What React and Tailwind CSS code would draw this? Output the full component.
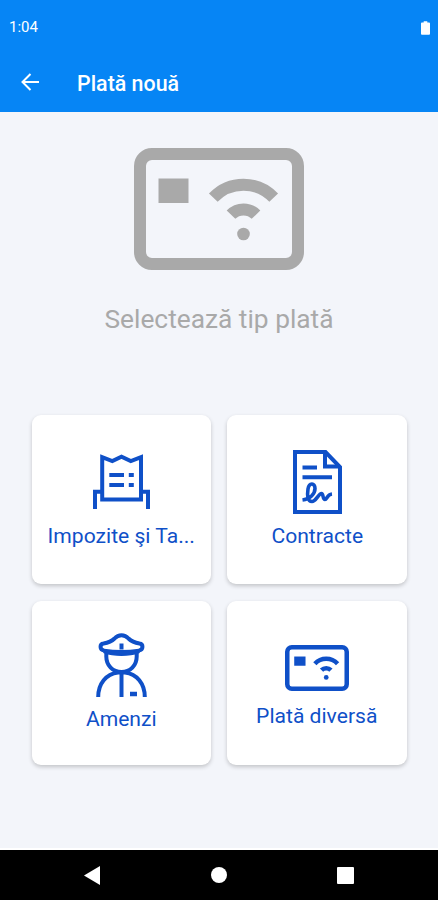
function CardIcon({ className }) {
  return (
    <svg viewBox="0 0 170 122" fill="none" stroke="currentColor" strokeWidth="12" className={className}>
      <rect x="6" y="6" width="158" height="110" rx="12" />
      <rect x="24.5" y="30.5" width="30" height="24.5" fill="currentColor" stroke="none" />
      <path d="M79.3 49.7a41.6 41.6 0 0 1 60.4 0" />
      <path d="M97 66.7a17.4 17.4 0 0 1 25 0" />
      <circle cx="109.5" cy="86" r="6.3" fill="currentColor" stroke="none" />
    </svg>
  )
}

function ReceiptIcon({ className }) {
  return (
    <svg viewBox="0 0 57 55" fill="none" stroke="currentColor" strokeWidth="4" className={className}>
      <path d="M9.2 45.5V3.2L19.3 7l9.2-4.2L37.8 7 48 3.2v42.3z" />
      <path d="M2 55V37.7h7M55 55V37.7h-7" />
      <path d="M16.3 21H31M35.8 21h5M16.3 31H31M35.8 31h5" />
    </svg>
  )
}

function ContractIcon({ className }) {
  return (
    <svg viewBox="0 0 49 64" fill="none" stroke="currentColor" strokeWidth="4" className={className}>
      <path d="M2 2h30.5L47 17v45H2z" />
      <path d="M32 2v14.5h15" />
      <path d="M9.5 17.5H24M9.5 27.3H39" />
      <path
        strokeWidth="3.6"
        strokeLinejoin="round"
        d="M9.5 50C17 49 22 44 22 38.5C22 32.5 16 32.5 15 39C14 46 14.5 51.5 19 51.5C23 51.5 25.5 43.5 28.5 43.5C30.5 43.5 29.5 49.5 32 49.5C34 49.5 34 44.5 39 44"
      />
    </svg>
  )
}

function OfficerIcon({ className }) {
  return (
    <svg viewBox="0 0 51 64" fill="none" stroke="currentColor" strokeWidth="4" strokeLinejoin="round" className={className}>
      <path d="M8 17.5c-4.5-.5-4.5-6.500-.5-7 6-1 8-2 11-5 4-4.5 10-4.5 14 0 3 3 5 4 11 5 4 .5 4 6.5-.5 7" />
      <path d="M8 16.5c10 1.500 25 1.500 35 0v3c-10 3.500-25 3.500-35 0z" fill="currentColor" strokeWidth="1.5" />
      <path d="M10.3 18v5.5c0 9 6.500 15.500 15.200 15.500s15.200-6.500 15.200-15.500V18" />
      <path d="M2.2 64c0-13.500 8-23 19.800-24.500h7c11.800 1.500 19.800 11 19.800 24.500" />
      <path d="M25.5 40v24" />
      <path d="M34 61h7" strokeWidth="4.5" />
      <path d="M25.500 10.500v6" />
    </svg>
  )
}

function PaymentCard({ icon, label, className }) {
  return (
    <button
      className={`flex flex-col items-center rounded-[9px] bg-white text-[#0f50c8] shadow-[0_2px_4px_rgba(0,0,0,0.2)] ${className}`}
    >
      {icon}
      <span className="whitespace-nowrap text-[21.1px] leading-6">{label}</span>
    </button>
  )
}

function StatusBar() {
  return (
    <div className="flex h-[55px] items-center justify-between pl-[9px] pr-[8px] text-white">
      <span className="text-[15px] leading-none">1:04</span>
      <svg viewBox="0 0 10 15" fill="currentColor" className="h-[14px] w-[9px]">
        <path d="M3 0h4v1.500h2a1 1 0 0 1 1 1V14a1 1 0 0 1-1 1H1a1 1 0 0 1-1-1V2.500a1 1 0 0 1 1-1h2z" />
      </svg>
    </div>
  )
}

function NavigationBar() {
  return (
    <nav className="flex h-[50px] items-center justify-between bg-black pl-[84px] pr-[84px] text-white">
      <svg viewBox="0 0 16 19" fill="currentColor" className="h-[19px] w-4">
        <path d="M0 9.5 16 0v19z" />
      </svg>
      <div className="h-4 w-4 rounded-full bg-white" />
      <div className="h-[17px] w-[17px] rounded-[1px] bg-white" />
    </nav>
  )
}

export default function App() {
  return (
    <div className="flex h-[900px] w-[438px] flex-col overflow-hidden bg-[#f3f5fa] font-[Roboto,sans-serif]">
      <header className="h-28 shrink-0 bg-[#0685f5]">
        <StatusBar />
        <div className="flex h-[55px] items-center pl-[21px] text-white">
          <svg viewBox="0 0 18 18" fill="none" stroke="currentColor" strokeWidth="2" className="mb-px h-[18px] w-[18px]">
            <path d="M18 9H1.500M9.500 1 1.500 9l8 8" />
          </svg>
          <h1 className="ml-[38px] mt-[2px] text-[21.4px] font-medium leading-6">Plată nouă</h1>
        </div>
      </header>

      <main className="flex flex-1 flex-col items-center border-b-2 border-white">
        <CardIcon className="mt-[36px] h-[122px] w-[170px] text-[#a9a9a9]" />
        <p className="mt-[33px] text-[26.3px] leading-8 text-[#a9a9a9]">Selectează tip plată</p>
        <div className="mt-[80px] grid w-[375px] grid-cols-2 grid-rows-[169px_164px] gap-x-[16px] gap-y-[17px]">
          <PaymentCard
            className="pt-[39px]"
            icon={<ReceiptIcon className="mb-[15px] h-[55px] w-[57px]" />}
            label="Impozite şi Ta..."
          />
          <PaymentCard
            className="pl-px pt-[35px]"
            icon={<ContractIcon className="mb-[10px] h-[64px] w-[49px]" />}
            label="Contracte"
          />
          <PaymentCard
            className="pt-[32px]"
            icon={<OfficerIcon className="mb-[10px] h-[64px] w-[51px]" />}
            label="Amenzi"
          />
          <PaymentCard
            className="pt-[44px]"
            icon={<CardIcon className="mb-[13px] h-[46px] w-[64px]" />}
            label="Plată diversă"
          />
        </div>
      </main>

      <NavigationBar />
    </div>
  )
}
